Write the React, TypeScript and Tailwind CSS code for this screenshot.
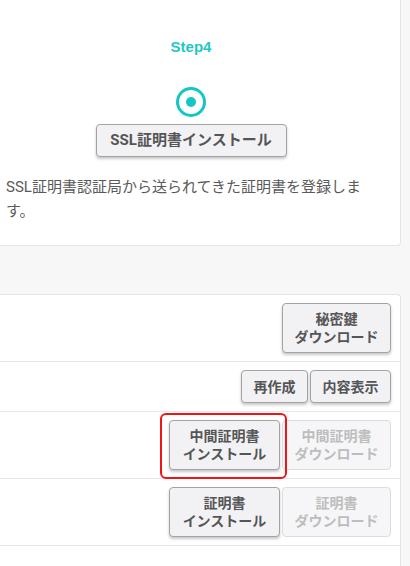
import React from "react";

const FONT = "font-['Roboto','Noto_Sans_CJK_JP',sans-serif]";

type BtnProps = {
  lines: string[];
  w: string;
  tall?: boolean;
  disabled?: boolean;
};

function Btn({ lines, w, tall, disabled }: BtnProps) {
  const base =
    "flex flex-col items-center justify-center rounded-[4px] border text-[14px] font-bold leading-[18px] whitespace-nowrap";
  const tone = disabled
    ? "border-[#dcdcdf] bg-[#f6f6f8] text-[#bdbdbd]"
    : "border-[#a3a3a6] bg-[#f2f2f5] text-[#555555] shadow-[0_2px_3px_rgba(0,0,0,0.22)]";
  return (
    <div className={`${base} ${tone} ${w} ${tall ? "h-[50px]" : "h-[33px]"}`}>
      {lines.map((l) => (
        <span key={l}>{l}</span>
      ))}
    </div>
  );
}

function Row({ children }: { children: React.ReactNode }) {
  return (
    <div className="flex justify-end gap-[2px] border-b border-[#e8e8e8] pt-[8px] pb-[8px] pr-[9px]">
      {children}
    </div>
  );
}

export default function App() {
  return (
    <div className={`w-[410px] h-[566px] overflow-hidden bg-[#f7f7f7] ${FONT}`}>
      {/* step card */}
      <div className="flex h-[246px] w-[401px] flex-col rounded-br-[4px] border-r border-b border-[#e4e4e4] bg-white pt-[38px] pl-[6px] pr-[24px]">
        <div className="flex flex-col items-center">
          <div className="font-['Liberation_Sans',sans-serif] text-[15px] font-bold leading-[18px] text-[#1ec8c8]">
            Step4
          </div>
          <div className="mt-[31px] flex h-[30px] w-[30px] items-center justify-center rounded-full border-[3px] border-[#14c6c6]">
            <div className="h-[10px] w-[10px] rounded-full bg-[#14c6c6]" />
          </div>
          <div className="mt-[7px] flex h-[33px] w-[191px] items-center justify-center rounded-[4px] border border-[#a3a3a6] bg-[#f2f2f5] text-[15px] font-bold text-[#555555] shadow-[0_2px_3px_rgba(0,0,0,0.22)]">
            SSL証明書インストール
          </div>
        </div>
        <p className="mt-[18px] w-[364px] text-[15px] leading-[24px] text-[#5a5a5a]">
          SSL証明書認証局から送られてきた証明書を登録します。
        </p>
      </div>

      {/* actions card */}
      <div className="mt-[48px] h-[300px] w-[401px] rounded-tr-[4px] border-t border-r border-[#e4e4e4] bg-white">
        <Row>
          <Btn lines={["秘密鍵", "ダウンロード"]} w="w-[109px]" tall />
        </Row>
        <Row>
          <Btn lines={["再作成"]} w="w-[67px]" />
          <Btn lines={["内容表示"]} w="w-[81px]" />
        </Row>
        <Row>
          <div className="relative">
            <Btn lines={["中間証明書", "インストール"]} w="w-[111px]" tall />
            <div className="pointer-events-none absolute -top-[7px] -left-[9px] -right-[7px] -bottom-[9px] rounded-[6px] border-2 border-[#f21414]" />
          </div>
          <Btn lines={["中間証明書", "ダウンロード"]} w="w-[109px]" tall disabled />
        </Row>
        <Row>
          <Btn lines={["証明書", "インストール"]} w="w-[111px]" tall />
          <Btn lines={["証明書", "ダウンロード"]} w="w-[109px]" tall disabled />
        </Row>
      </div>
    </div>
  );
}
